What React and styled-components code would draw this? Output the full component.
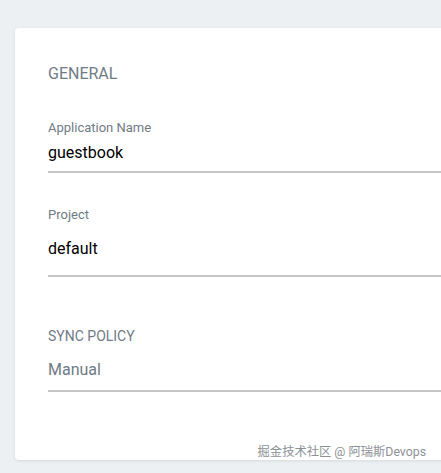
import { createGlobalStyle, styled } from "styled-components"

const Global = createGlobalStyle`
  html, body {
    margin: 0;
    padding: 0;
    background: #edf0f2;
    font-family: Roboto, "Liberation Sans", sans-serif;
    overflow: hidden;
  }
`

const Page = styled.div`
  position: relative;
  height: 473px;
  padding-top: 28px;
  box-sizing: border-box;
`

const Card = styled.div`
  margin-left: 15px;
  margin-right: -20px;
  background: #fff;
  border-radius: 4px;
  box-shadow: 0 1px 3px rgba(0, 0, 0, 0.1);
  padding: 36px 0 68px 33px;
`

const Section = styled.div`
  font-size: 16px;
  line-height: 20px;
  color: #6f7b85;
  margin-bottom: 36px;
`

const Field = styled.div`
  margin-top: ${(p) => p.gap || 0}px;
`

const Label = styled.div`
  font-size: ${(p) => (p.upper ? 14 : 13)}px;
  line-height: 16px;
  color: #707b85;
  text-transform: ${(p) => (p.upper ? "uppercase" : "none")};
`

const Value = styled.div`
  font-size: 16px;
  line-height: 24px;
  color: ${(p) => (p.muted ? "#6f7b85" : "#000")};
  margin-top: ${(p) => p.top}px;
  padding-bottom: ${(p) => p.bottom}px;
  border-bottom: 2px solid #c6c6c6;
`

const Watermark = styled.div`
  position: absolute;
  right: 15px;
  top: 445px;
  font-size: 12.3px;
  line-height: 14px;
  color: #8c9196;
  font-family: Roboto, "Noto Sans CJK SC", sans-serif;
`

export default function App() {
  return (
    <Page>
      <Global />
      <Card>
        <Section>GENERAL</Section>
        <Field>
          <Label>Application Name</Label>
          <Value top={5} bottom={6}>guestbook</Value>
        </Field>
        <Field gap={34}>
          <Label>Project</Label>
          <Value top={14} bottom={14}>default</Value>
        </Field>
        <Field gap={51}>
          <Label upper>Sync Policy</Label>
          <Value top={14} bottom={8} muted>Manual</Value>
        </Field>
      </Card>
      <Watermark>掘金技术社区 @ 阿瑞斯Devops</Watermark>
    </Page>
  )
}
